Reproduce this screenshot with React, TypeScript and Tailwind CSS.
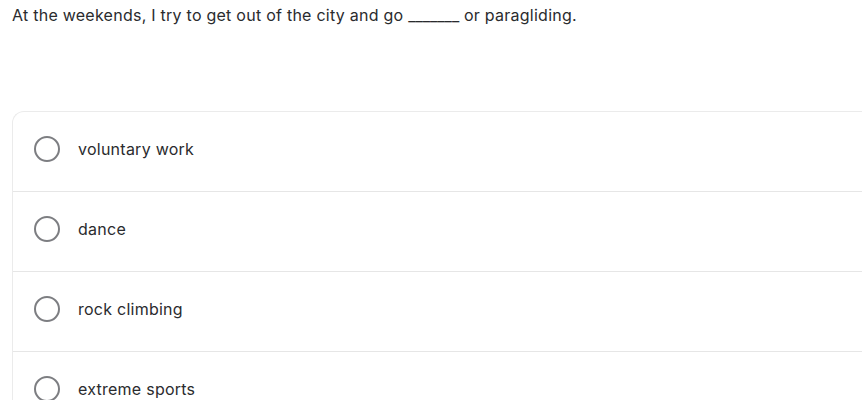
import React from "react";

const options = ["voluntary work", "dance", "rock climbing", "extreme sports"];

export default function App() {
  return (
    <div
      className="w-[862px] h-[400px] overflow-hidden bg-white text-[#2a2b2e] tracking-[0.25px]"
      style={{ fontFamily: "Inter, 'Noto Sans', sans-serif" }}
    >
      <p className="pl-3 pt-[3px] text-[16px] leading-6">
        At the weekends, I try to get out of the city and go{" "}
        <span className="tracking-[0px]">_______</span> or paragliding.
      </p>
      <div className="ml-3 mt-[84px] w-[880px] rounded-tl-xl border-t border-l border-[#ebebeb]">
        {options.map((o) => (
          <div
            key={o}
            className="flex h-[80px] items-center border-b border-[#e6e6e6] pb-[6px] pl-[21px]"
          >
            <span className="h-[26px] w-[26px] shrink-0 rounded-full border-[2.5px] border-[#7d7e82]" />
            <span className="ml-[18px] text-[16px]">{o}</span>
          </div>
        ))}
      </div>
    </div>
  );
}
